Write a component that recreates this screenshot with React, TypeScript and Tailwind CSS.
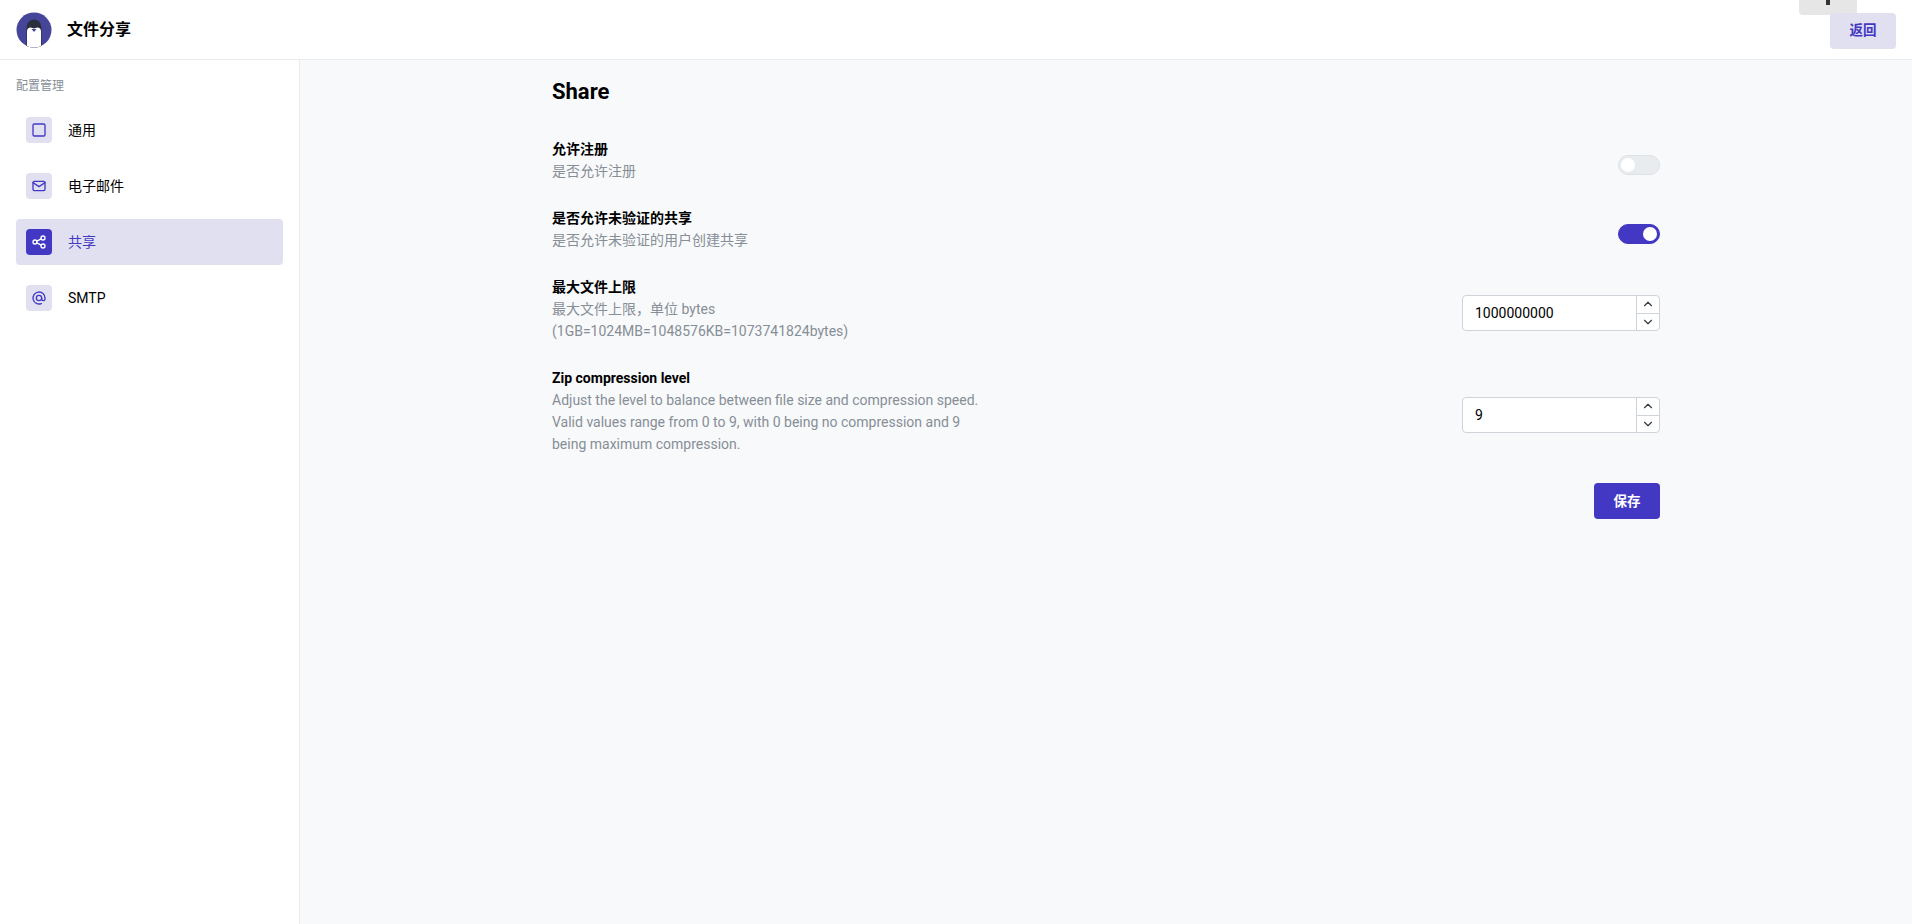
import { TbAt, TbChevronDown, TbChevronUp, TbMail, TbShare, TbSquare } from 'react-icons/tb';

const fontStack = '[font-family:Roboto,"Noto_Sans_CJK_SC",sans-serif]';

const navItems = [
  { label: '通用', icon: TbSquare },
  { label: '电子邮件', icon: TbMail },
  { label: '共享', icon: TbShare, active: true },
  { label: 'SMTP', icon: TbAt },
];

function Logo() {
  return (
    <svg width="36" height="36" viewBox="0 0 36 36">
      <defs>
        <clipPath id="logo-clip">
          <circle cx="18" cy="18" r="17.5" />
        </clipPath>
      </defs>
      <g clipPath="url(#logo-clip)">
        <rect width="36" height="36" fill="#45459a" />
        <path d="M10.500 36V17C10.500 11 13.500 7.500 18 7.500s7.500 3.500 7.500 9.500v19z" fill="#2b2f3d" />
        <path d="M11 36V19.500c0-2.500 1.500-4 3.500-4 1.500 0 2.500 1 3.500 1s2-1 3.500-1c2 0 3.500 1.500 3.500 4V36z" fill="#ffffff" />
        <path d="M15.500 17h5L18 20z" fill="#45459a" />
      </g>
    </svg>
  );
}

function Toggle({ on }: { on?: boolean }) {
  return (
    <div
      className={`mt-[2px] flex h-5 w-[42px] items-center rounded-full border px-[2px] ${
        on ? 'justify-end border-[#4338c4] bg-[#4338c4]' : 'justify-start border-[#dee2e6] bg-[#e9ecef]'
      }`}
    >
      <span className="h-3.5 w-3.5 rounded-full bg-white" />
    </div>
  );
}

function NumberInput({ value }: { value: string }) {
  return (
    <div className="flex h-9 w-[198px] items-stretch rounded border border-[#ced4da] bg-white">
      <span className="flex flex-1 items-center pl-3 text-sm text-black">{value}</span>
      <div className="flex w-[23px] flex-col border-l border-[#ced4da] text-[#343a40]">
        <span className="flex flex-1 items-center justify-center border-b border-[#ced4da]">
          <TbChevronUp size={14} />
        </span>
        <span className="flex flex-1 items-center justify-center">
          <TbChevronDown size={14} />
        </span>
      </div>
    </div>
  );
}

function SettingRow({
  title,
  children,
  control,
}: {
  title: string;
  children: React.ReactNode;
  control: React.ReactNode;
}) {
  return (
    <div className="flex items-center justify-between">
      <div className="w-[443px] text-sm leading-[22px]">
        <div className="leading-[21px] font-bold text-black">{title}</div>
        <div className="text-[#868e96]">{children}</div>
      </div>
      <div className="pt-[7px]">{control}</div>
    </div>
  );
}

export default function App() {
  return (
    <div className={`relative flex h-[924px] flex-col overflow-hidden bg-white ${fontStack}`}>
      <div className="absolute top-0 left-[1799px] z-10 h-[15px] w-[58px] rounded-b bg-[#e6e6e6]">
        <span className="mx-auto block h-[5px] w-[4px] bg-[#333333]" />
      </div>

      <header className="flex h-[60px] shrink-0 items-center justify-between border-b border-[#e9ecef] pr-[16px] pl-[16px]">
        <div className="flex items-center gap-[15px]">
          <Logo />
          <span className="text-base font-bold text-black">文件分享</span>
        </div>
        <button className="z-20 mt-[2px] h-9 w-[66px] rounded bg-[#e1e0f0] text-[13.5px] font-bold text-[#4338c4]">
          返回
        </button>
      </header>

      <div className="flex flex-1">
        <aside className="w-[300px] shrink-0 border-r border-[#e9ecef] px-4 pt-[16px]">
          <div className="mb-[11px] text-xs leading-[20px] text-[#868e96]">配置管理</div>
          <nav className="flex flex-col gap-[10px]">
            {navItems.map((item) => {
              const Icon = item.icon;
              return (
                <div
                  key={item.label}
                  className={`flex h-[46px] items-center gap-4 rounded px-[10px] ${item.active ? 'bg-[#e1e0f0]' : ''}`}
                >
                  <span
                    className={`flex h-[26px] w-[26px] items-center justify-center rounded ${
                      item.active ? 'bg-[#4338c4] text-white' : 'bg-[#e1e0f0] text-[#4338c4]'
                    }`}
                  >
                    <Icon size={16} />
                  </span>
                  <span className={`text-sm ${item.active ? 'text-[#4338c4]' : 'text-black'}`}>{item.label}</span>
                </div>
              );
            })}
          </nav>
        </aside>

        <main className="flex-1 bg-[#f8f9fb]">
          <div className="mx-auto w-[1108px] pt-[16px]">
            <h3 className="text-[22px] leading-[32px] font-bold text-black">Share</h3>
            <div className="mt-[31px] flex flex-col gap-[26px]">
              <SettingRow title="允许注册" control={<Toggle />}>
                是否允许注册
              </SettingRow>
              <SettingRow title="是否允许未验证的共享" control={<Toggle on />}>
                是否允许未验证的用户创建共享
              </SettingRow>
              <SettingRow title="最大文件上限" control={<NumberInput value="1000000000" />}>
                最大文件上限，单位 bytes (1GB=1024MB=1048576KB=1073741824bytes)
              </SettingRow>
              <SettingRow title="Zip compression level" control={<NumberInput value="9" />}>
                Adjust the level to balance between file size and compression speed. Valid values range from 0 to 9, with
                0 being no compression and 9 being maximum compression.
              </SettingRow>
            </div>
            <div className="mt-[28px] flex justify-end">
              <button className="h-9 w-[66px] rounded bg-[#4338c4] text-[13.5px] font-bold text-white">保存</button>
            </div>
          </div>
        </main>
      </div>
    </div>
  );
}
